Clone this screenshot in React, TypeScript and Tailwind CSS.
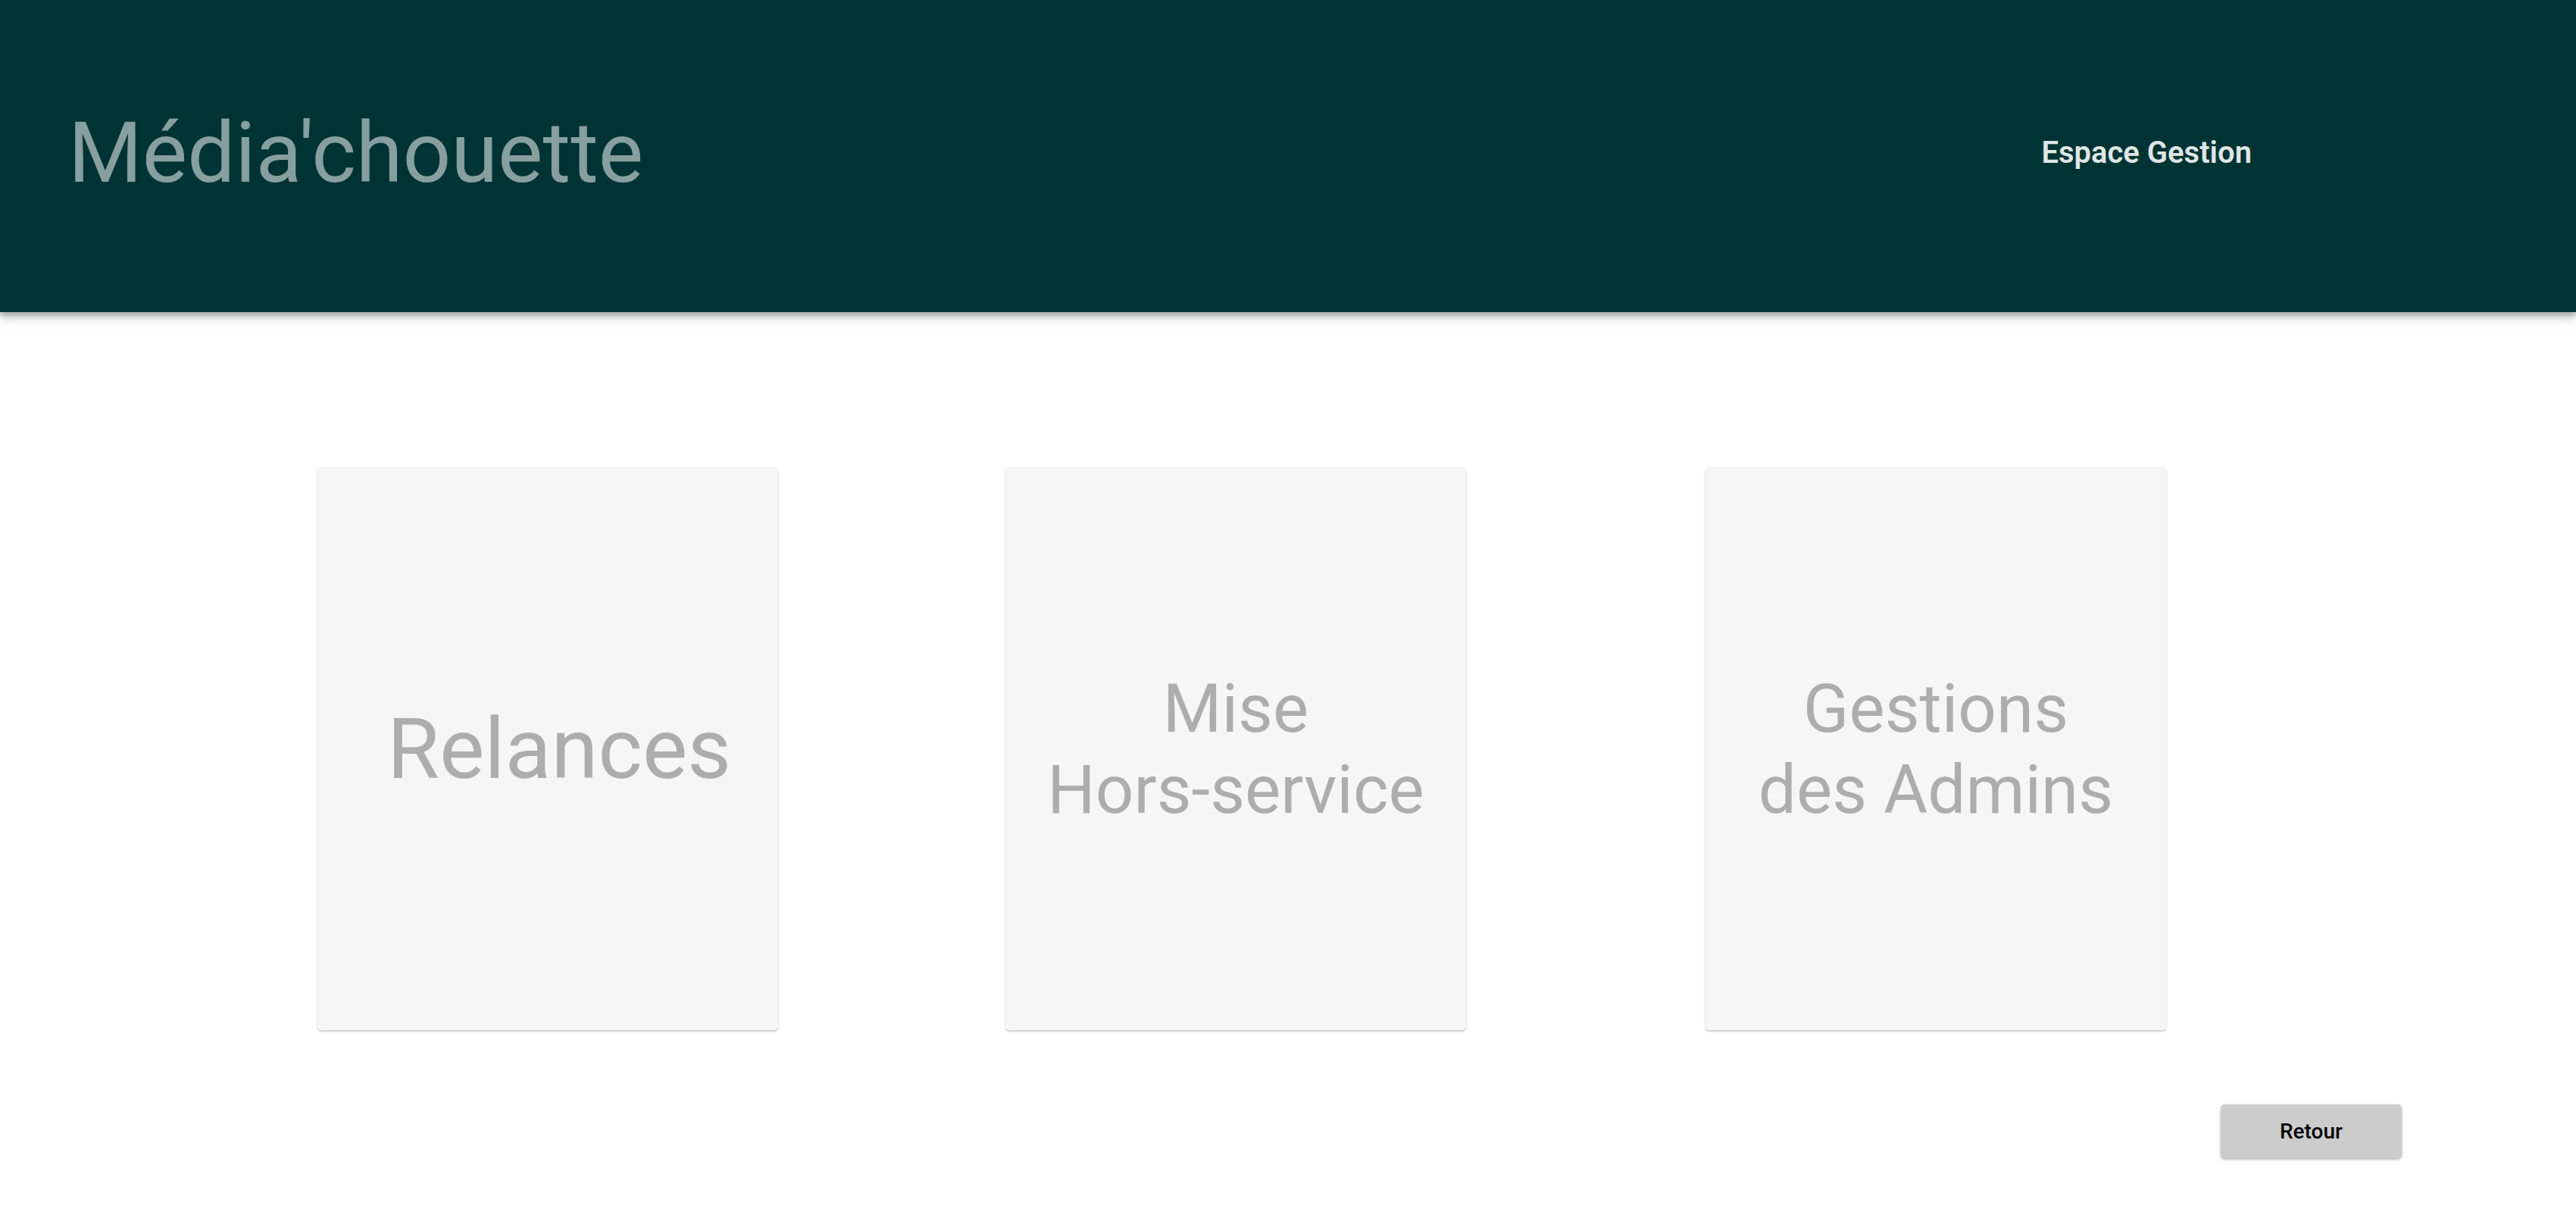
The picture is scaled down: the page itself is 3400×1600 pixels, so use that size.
import React from "react";

const cards = [
  { id: 1, lines: ["Relances"], big: true },
  { id: 2, lines: ["Mise", "Hors-service"], big: false },
  { id: 3, lines: ["Gestions", "des Admins"], big: false },
];

function Header() {
  return (
    <header className="h-[412px] bg-[#003333] flex items-center justify-between pl-[90px] pr-[428px] pb-[8px] shadow-[0_4px_8px_rgba(0,0,0,0.3),0_8px_16px_rgba(0,0,0,0.14)] relative z-10">
      <h1 className="text-[112px] leading-none font-normal text-[#879f9f]">Média'chouette</h1>
      <span className="text-[40px] font-semibold text-[#dfe6e6]">Espace Gestion</span>
    </header>
  );
}

function Card({ lines, big }: { lines: string[]; big: boolean }) {
  return (
    <div className="w-[608px] h-[743px] bg-[#f6f6f6] rounded-[5px] shadow-[0_2px_2px_rgba(0,0,0,0.14),0_1px_4px_rgba(0,0,0,0.08)] flex items-center justify-center text-center text-[#adadad]">
      {big ? (
        <p className="text-[112px] leading-none pl-[30px]">{lines[0]}</p>
      ) : (
        <p className="text-[89px] leading-[107px]">
          {lines[0]}
          <br />
          {lines[1]}
        </p>
      )}
    </div>
  );
}

export default function App() {
  return (
    <div className="min-h-[1600px] bg-white font-['Roboto',sans-serif]">
      <Header />
      <main className="pt-[205px]">
        <div className="flex pl-[419px]">
          <Card lines={cards[0].lines} big />
          <div className="ml-[300px]">
            <Card lines={cards[1].lines} big={false} />
          </div>
          <div className="ml-[316px]">
            <Card lines={cards[2].lines} big={false} />
          </div>
        </div>
        <div className="flex justify-end pr-[230px] mt-[98px]">
          <button className="w-[239px] h-[71px] bg-[#cccccc] rounded-[5px] text-[28px] font-medium text-black shadow-[0_2px_3px_rgba(0,0,0,0.2),0_1px_5px_rgba(0,0,0,0.1)]">
            Retour
          </button>
        </div>
      </main>
    </div>
  );
}
